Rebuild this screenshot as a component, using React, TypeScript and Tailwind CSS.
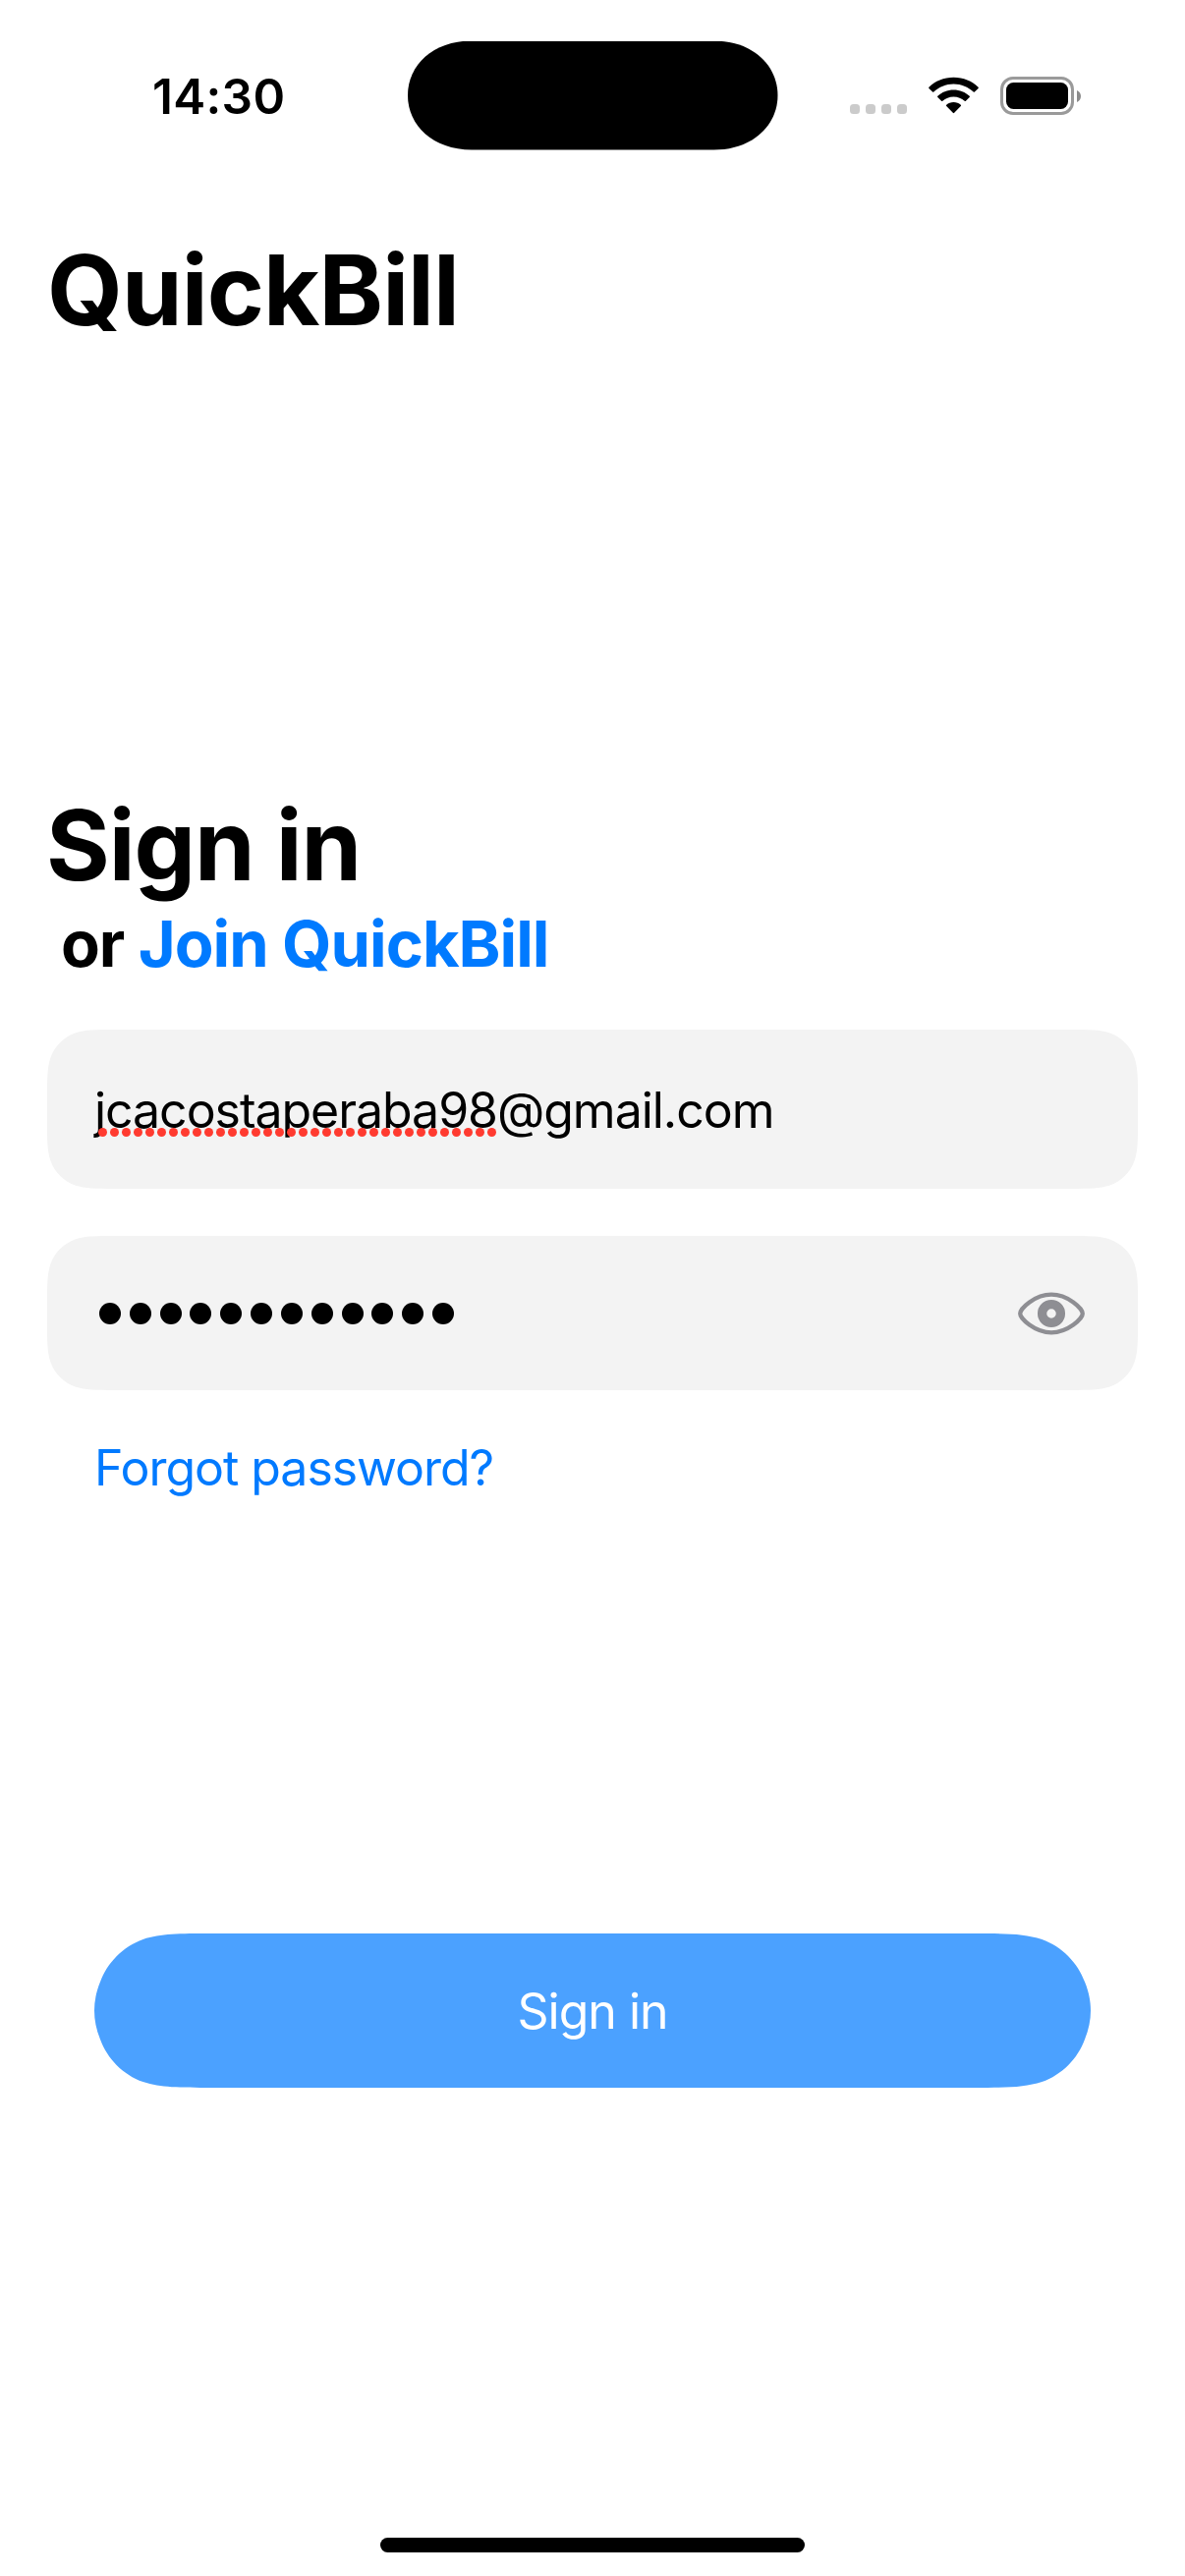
import React from "react";

const passwordLength = 12;
const spellingDots = 34;

function StatusBar() {
  return (
    <header className="flex h-[162px] shrink-0 items-start">
      <time className="ml-[155px] mt-[68px] w-[260px] text-[49.5px] font-semibold leading-[60px] tracking-[0.3px]">
        14:30
      </time>
      <div className="mt-[41.5px] h-[111px] w-[376.5px] bg-black [clip-path:path('M65_0H311.500C351_0_376.500_25_376.500_55.5C376.500_86_351_111_311.500_111H65C25.500_111_0_86_0_55.5C0_25_25.500_0_65_0Z')]" />
      <div className="ml-[73.5px] mt-[106px] flex gap-[6px]">
        <i className="size-[10px] rounded-[3.5px] bg-[#cbcbcb]" />
        <i className="size-[10px] rounded-[3.5px] bg-[#cbcbcb]" />
        <i className="size-[10px] rounded-[3.5px] bg-[#cbcbcb]" />
        <i className="size-[10px] rounded-[3.5px] bg-[#cbcbcb]" />
      </div>
      <svg className="ml-[22px] mt-[78px] h-[39px] w-[51px]" viewBox="0 0 51 39" fill="black">
        <path d="M25.5 .8C35.5 .8 44.300 4.600 50.600 10.700Q51.100 11.300 50.600 11.900L46.900 15.600Q46.300 16.100 45.700 15.600C40.300 10.600 33.300 7.600 25.500 7.600S10.700 10.600 5.300 15.600Q4.700 16.100 4.100 15.600L.4 11.900Q-.1 11.300 .4 10.700C6.700 4.600 15.500 .8 25.500 .8Z" />
        <path d="M25.500 13.400C31.800 13.400 37.500 15.800 41.700 19.700Q42.300 20.400 41.700 21L37.900 24.800Q37.300 25.300 36.700 24.800C33.700 22.100 29.800 20.400 25.500 20.400S17.300 22.100 14.300 24.800Q13.700 25.300 13.100 24.800L9.300 21Q8.700 20.400 9.300 19.700C13.500 15.800 19.200 13.400 25.500 13.400Z" />
        <path d="M25.500 26C28.300 26 30.900 27 32.800 28.700Q33.500 29.400 32.800 30.100L26.200 36.800Q25.500 37.600 24.800 36.800L18.200 30.100Q17.500 29.400 18.200 28.700C20.100 27 22.700 26 25.500 26Z" />
      </svg>
      <div className="ml-[22px] mt-[78px] flex items-center gap-[3px]">
        <div className="h-[39px] w-[75px] rounded-[13px] border-[3px] border-[#9a9a9a] p-[3px]">
          <div className="size-full rounded-[7.500px] bg-black" />
        </div>
        <svg className="h-[12px] w-[4px]" viewBox="0 0 4 12" fill="#8c8c8c">
          <path d="M0 0C2.400 1 4 3.300 4 6S2.400 11 0 12Z" />
        </svg>
      </div>
    </header>
  );
}

function EyeIcon() {
  return (
    <svg className="h-[44px] w-[68px]" viewBox="0 0 68 44" fill="none">
      <path
        d="M34 2.700C51 2.700 65.800 17 65.800 22S51 41.300 34 41.300S2.200 27 2.200 22S17 2.700 34 2.700Z"
        stroke="#8e8e93"
        strokeWidth="4.300"
      />
      <circle cx="34" cy="22" r="9.400" stroke="#8e8e93" strokeWidth="9.300" />
    </svg>
  );
}

export default function App() {
  return (
    <main className="flex h-[2622px] w-[1206px] flex-col overflow-hidden bg-white font-['Inter',sans-serif] text-black">
      <StatusBar />
      <h1 className="ml-[48px] mt-[73px] text-[99px] font-bold leading-[120px] tracking-[-0.900px]">QuickBill</h1>

      <form className="mt-[445px] flex flex-col px-[48px]">
        <h2 className="-ml-[1px] text-[99px] font-bold leading-[120px] tracking-[-1.100px]">Sign in</h2>
        <p className="ml-[14px] mt-[1px] whitespace-pre text-[65px] font-bold leading-[80px] tracking-[-1px]">
          or <a className="text-[#007aff]">Join QuickBill</a>
        </p>

        <div className="mt-[47px] flex h-[162px] items-center bg-[#f3f3f3] px-[48px] [clip-path:path('M68.8_0H1041.2C1061_0_1070.900_0_1081.600_3.400C1093.200_7.600_1102.400_16.800_1106.600_28.400C1110_39.100_1110_49_1110_68.800V93.200C1110_113_1110_122.900_1106.600_133.600C1102.400_145.200_1093.200_154.400_1081.600_158.600C1070.900_162_1061_162_1041.200_162H68.800C49_162_39.100_162_28.400_158.600C16.800_154.400_7.600_145.200_3.400_133.600C0_122.900_0_113_0_93.200V68.800C0_49_0_39.100_3.400_28.400C7.600_16.800_16.800_7.600_28.400_3.400C39.100_0_49_0_68.800_0Z')]">
          <div className="relative whitespace-nowrap pt-[1px] text-[50px] leading-[60px] tracking-[-1.040px]">
            jcacostaperaba98@gmail.com
            <div className="absolute left-[4px] top-[49px] flex gap-[3px]">
              {Array.from({ length: spellingDots }, (_, i) => (
                <i key={i} className="size-[9px] shrink-0 rounded-full bg-[#ff3b30]" />
              ))}
            </div>
          </div>
        </div>

        <div className="mt-[48px] flex h-[157px] items-center justify-between bg-[#f3f3f3] pl-[53px] pr-[54px] [clip-path:path('M68.8_0H1041.2C1061_0_1070.900_0_1081.600_3.400C1093.200_7.600_1102.400_16.800_1106.600_28.400C1110_39.100_1110_49_1110_68.800V88.200C1110_108_1110_117.900_1106.600_128.600C1102.400_140.200_1093.200_149.400_1081.600_153.600C1070.900_157_1061_157_1041.200_157H68.800C49_157_39.100_157_28.400_153.600C16.800_149.400_7.600_140.200_3.400_128.600C0_117.900_0_108_0_88.200V68.800C0_49_0_39.100_3.400_28.400C7.600_16.800_16.800_7.600_28.400_3.400C39.100_0_49_0_68.800_0Z')]">
          <div className="flex gap-[8.820px]">
            {Array.from({ length: passwordLength }, (_, i) => (
              <i key={i} className="size-[22px] rounded-full bg-black" />
            ))}
          </div>
          <EyeIcon />
        </div>

        <a className="ml-[48px] mt-[49px] text-[50px] leading-[60px] tracking-[-1.040px] text-[#007aff]">Forgot password?</a>

        <button
          type="button"
          className="mx-[48px] mt-[444px] h-[157px] bg-[#4ba1ff] text-[50px] leading-[60px] tracking-[-1px] text-white [clip-path:path('M120_0H894C928.600_0_945.800_0_964.400_5.900C984.700_13.300_1000.700_29.300_1008.100_49.600C1012_59_1014_69_1014_78.500C1014_88_1012_98_1008.100_107.400C1000.700_127.700_984.700_143.700_964.400_151.100C945.800_157_928.600_157_894_157H120C85.400_157_68.200_157_49.600_151.100C29.300_143.700_13.300_127.700_5.900_107.400C2_98_0_88_0_78.500C0_69_2_59_5.900_49.600C13.300_29.300_29.300_13.300_49.600_5.900C68.200_0_85.400_0_120_0Z')]"
        >
          Sign in
        </button>
      </form>

      <div className="mx-auto mt-[458px] h-[15px] w-[432px] rounded-full bg-black" />
    </main>
  );
}
